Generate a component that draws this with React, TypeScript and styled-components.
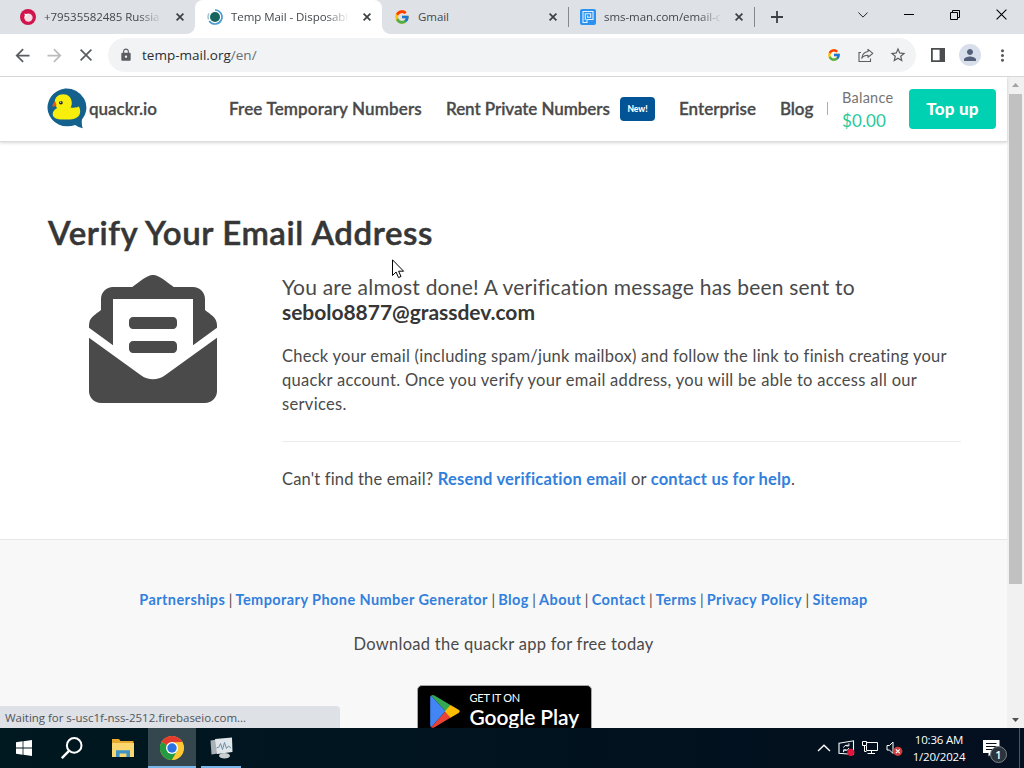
import React from "react";
import styled, { createGlobalStyle, css } from "styled-components";
import {
  MdArrowBack,
  MdArrowForward,
  MdLock,
  MdMoreVert,
  MdPerson,
  MdStarBorder,
} from "react-icons/md";
import { FcGoogle } from "react-icons/fc";
import { FaEnvelopeOpenText } from "react-icons/fa";

const uiFont = `"Open Sans", "Noto Sans", sans-serif`;
const siteFont = `Lato, "Open Sans", sans-serif`;

const GlobalStyle = createGlobalStyle`
  * {
    box-sizing: border-box;
  }

  body {
    margin: 0;
    overflow: hidden;
    background: #fff;
  }

  svg {
    display: block;
    flex: none;
  }
`;

const Screen = styled.div`
  position: relative;
  display: flex;
  flex-direction: column;
  width: 1024px;
  height: 768px;
  overflow: hidden;
  font-family: ${uiFont};
`;

/* ---------- browser ---------- */

const TabStrip = styled.div`
  display: flex;
  height: 34px;
  background: #dee1e6;
`;

const Tab = styled.div<{
  $width: number;
  $indent?: number;
  $active?: boolean;
  $line?: boolean;
}>`
  position: relative;
  display: flex;
  align-items: center;
  width: ${({ $width }) => $width}px;
  padding: 0 9px 0 ${({ $indent = 12 }) => $indent}px;
  ${({ $active }) =>
    $active &&
    css`
      background: #fff;
      border-radius: 8px 8px 0 0;

      &::before,
      &::after {
        content: "";
        position: absolute;
        bottom: 0;
        width: 8px;
        height: 8px;
      }
      &::before {
        left: -8px;
        background: radial-gradient(circle at 0 0, transparent 7.5px, #fff 8px);
      }
      &::after {
        right: -8px;
        background: radial-gradient(
          circle at 100% 0,
          transparent 7.5px,
          #fff 8px
        );
      }
    `}
  ${({ $line }) =>
    $line &&
    css`
      padding-right: 10px;

      &::after {
        content: "";
        position: absolute;
        right: 0;
        top: 7px;
        width: 1px;
        height: 20px;
        background: #85888d;
      }
    `}
`;

const TabTitle = styled.span<{ $fade?: boolean }>`
  width: 118px;
  margin-left: 8px;
  margin-right: auto;
  overflow: hidden;
  white-space: nowrap;
  font-size: 11.5px;
  line-height: 18px;
  letter-spacing: -0.05px;
  color: #43474c;
  ${({ $fade }) =>
    $fade &&
    css`
      mask-image: linear-gradient(to right, #000 80%, transparent);
    `}
`;

const NewTab = styled.div`
  display: flex;
  align-items: center;
  padding-left: 16px;
  flex: 1;
`;

const WindowButtons = styled.div`
  display: flex;
  height: 29px;
`;

const WindowButton = styled.div`
  display: flex;
  align-items: center;
  justify-content: center;
  width: 46px;
`;

const Toolbar = styled.div`
  display: flex;
  align-items: center;
  height: 43px;
  padding: 0 11px;
  background: #fff;
  border-bottom: 1px solid #d5d7da;
`;

const NavButton = styled.div<{ $muted?: boolean }>`
  display: flex;
  justify-content: center;
  width: 22px;
  margin-right: 10px;
  color: ${({ $muted }) => ($muted ? "#babcbe" : "#5a5d61")};
`;

const Omnibox = styled.div`
  display: flex;
  align-items: center;
  width: 808px;
  height: 34px;
  margin-left: 1px;
  padding: 0 8px 0 11px;
  border-radius: 17px;
  background: #f1f3f4;
  color: #5a5d61;
`;

const Url = styled.span`
  margin-left: 9px;
  margin-right: auto;
  font-size: 13.5px;
  color: #2b2d30;

  span {
    color: #6a6e73;
  }
`;

const OmniIcon = styled.div`
  display: flex;
  justify-content: center;
  width: 20px;
  margin-left: 12px;
`;

const ToolbarRight = styled.div`
  display: flex;
  flex: 1;
  align-items: center;
  padding-left: 15px;
  color: #5a5d61;
`;

const Avatar = styled.div`
  display: flex;
  align-items: center;
  justify-content: center;
  width: 22px;
  height: 22px;
  margin: 0 12px 0 14px;
  border-radius: 50%;
  background: #d9deeb;
  color: #54607a;
`;

/* ---------- page ---------- */

const Viewport = styled.div`
  position: relative;
  display: flex;
  height: 651px;
  overflow: hidden;
`;

const Page = styled.div`
  width: 1007px;
  background: #fff;
  font-family: ${siteFont};
  font-size: 16.5px;
  font-variant-ligatures: none;
  color: #4a4a4a;
`;

const Navbar = styled.header`
  position: relative;
  display: flex;
  align-items: center;
  height: 65px;
  padding: 0 0 2px 47px;
  border-bottom: 1px solid #dcdcdc;
  box-shadow: 0 1px 3px rgba(0, 0, 0, 0.16);
  white-space: nowrap;
`;

const Brand = styled.div`
  display: flex;
  align-items: center;
  width: 182px;
  gap: 2px;
  font-size: 17px;
  font-weight: 600;
  letter-spacing: -0.05px;
  -webkit-text-stroke: 0.25px;
`;

const NavLink = styled.a<{ $width: number; $tracking?: number }>`
  width: ${({ $width }) => $width}px;
  font-size: 17px;
  font-weight: 600;
  letter-spacing: ${({ $tracking = 0 }) => $tracking}px;
  -webkit-text-stroke: 0.3px;
`;

const NewTag = styled.span`
  width: 35px;
  margin: 2px 24px 0 0;
  border-radius: 4px;
  background: #025497;
  color: #fff;
  font-size: 8.5px;
  font-weight: 900;
  line-height: 24px;
  text-align: center;
`;

const Divider = styled.span`
  width: 1px;
  height: 13px;
  background: #adadad;
`;

const Balance = styled.div`
  display: flex;
  flex-direction: column;
  width: 67px;
  margin-top: 1px;
  padding-left: 14px;
  font-size: 14.5px;
  line-height: 23px;
  letter-spacing: 0.25px;
  color: #757575;

  strong {
    font-size: 17px;
    font-weight: 400;
    letter-spacing: 0.1px;
    color: #26c99c;
  }
`;

const TopUp = styled.button`
  width: 87px;
  height: 40px;
  margin: 2px 0 0 14px;
  padding: 0 0 2px;
  border: 0;
  border-radius: 4px;
  background: #00d1b2;
  color: #fff;
  font-family: inherit;
  font-size: 17px;
  font-weight: 900;
  letter-spacing: 0.2px;
`;

const Main = styled.main`
  height: 397px;
  padding: 70px 46px 0 48px;
`;

const Title = styled.h1`
  margin: 0;
  font-size: 33px;
  font-weight: 600;
  line-height: 40px;
  letter-spacing: 0.57px;
  -webkit-text-stroke: 0.5px;
  color: #363636;
`;

const Columns = styled.div`
  display: flex;
  gap: 65px;
  margin-top: 22px;
  padding-left: 41px;
`;

const EnvelopeIcon = styled(FaEnvelopeOpenText)`
  width: 128px;
  height: 128px;
  margin-top: 1px;
`;

const Message = styled.div`
  flex: 1;
  white-space: nowrap;
`;

const Lead = styled.p`
  margin: 0 0 20px;
  font-size: 21px;
  line-height: 25px;
  letter-spacing: 0.21px;

  strong {
    color: #363636;
    letter-spacing: -0.04px;
  }
`;

const Text = styled.p<{ $tracking?: number }>`
  margin: 0;
  line-height: 24px;
  letter-spacing: ${({ $tracking = 0.25 }) => $tracking}px;
`;

const Rule = styled.hr`
  height: 1px;
  margin: 25px 0;
  border: 0;
  background: #ededed;
`;

const Link = styled.a`
  color: #3280dc;
  font-weight: 700;
  letter-spacing: 0.21px;
`;

const Footer = styled.footer`
  display: flex;
  flex-direction: column;
  align-items: center;
  height: 220px;
  padding-top: 48px;
  border-top: 1px solid #e6e6e6;
  background: #f8f8f8;
`;

const FooterLinks = styled.div`
  font-size: 14.5px;
  line-height: 24px;
  letter-spacing: -0.27px;
  white-space: nowrap;

  ${Link} {
    letter-spacing: 0.42px;
  }
`;

const Download = styled.p`
  margin: 20px 0 29px;
  line-height: 24px;
  letter-spacing: 0.28px;
`;

const PlayBadge = styled.div`
  display: flex;
  width: 175px;
  height: 53px;
  margin-left: 1px;
  padding: 8px 0 0 12px;
  border: 1px solid #a6a6a6;
  border-radius: 5px;
  background: #000;
  color: #fff;
`;

const PlayText = styled.div`
  margin-left: 10px;
  margin-top: -3px;
  font-size: 11px;
  line-height: 14px;
  letter-spacing: -0.25px;
  white-space: nowrap;

  strong {
    display: block;
    font-size: 21px;
    font-weight: 600;
    line-height: 23px;
    letter-spacing: -0.1px;
  }
`;

const Scrollbar = styled.div`
  display: flex;
  flex-direction: column;
  align-items: center;
  justify-content: space-between;
  width: 17px;
  padding: 6px 0;
  background: #f1f1f1;
`;

const Thumb = styled.div`
  width: 13px;
  height: 490px;
  margin-top: 7px;
  margin-bottom: auto;
  background: #c1c1c1;
`;

const StatusBubble = styled.div`
  position: absolute;
  left: 0;
  bottom: 0;
  width: 340px;
  height: 22px;
  padding-left: 5px;
  border-top-right-radius: 4px;
  background: #dee1e6;
  color: #505459;
  font-size: 11.5px;
  line-height: 23px;
  letter-spacing: -0.03px;
`;

const Cursor = styled.svg`
  position: absolute;
  left: 392px;
  top: 259px;
`;

/* ---------- taskbar ---------- */

const Taskbar = styled.div`
  display: flex;
  height: 40px;
  background: linear-gradient(to right, #001820, #01131f 50%, #040f1f);
  color: #fff;
`;

const TaskItem = styled.div<{ $open?: boolean; $focused?: boolean }>`
  display: flex;
  align-items: center;
  justify-content: center;
  width: 48px;
  ${({ $open }) =>
    $open &&
    css`
      background: linear-gradient(#79b6ea, #79b6ea) 50% 100% / 40px 2px
        no-repeat;
    `}
  ${({ $focused }) =>
    $focused &&
    css`
      margin: 0 1px 0 2px;
      background: #34464e;
      box-shadow: inset 0 -2px #79b6ea;
    `}
`;

const PinnedItem = styled(TaskItem)`
  width: 50px;
  padding-left: 4px;
`;

const Tray = styled.div`
  display: flex;
  align-items: center;
  gap: 7px;
  margin-left: auto;
`;

const Clock = styled.div`
  display: flex;
  flex-direction: column;
  align-items: center;
  width: 54px;
  margin-left: 2px;
  font-size: 11.5px;
  line-height: 17.5px;
  letter-spacing: -0.2px;
  white-space: nowrap;
`;

const Notifications = styled.div`
  position: relative;
  width: 36px;
  height: 40px;
  margin-left: 10px;
  padding-top: 12px;
`;

const Count = styled.span`
  position: absolute;
  left: 7px;
  top: 18px;
  width: 17px;
  height: 17px;
  border: 1px solid #7d838a;
  border-radius: 50%;
  background: #2b333c;
  font-size: 11px;
  font-weight: 600;
  line-height: 15px;
  text-align: center;
`;

const ShowDesktop = styled.div`
  width: 5px;
  height: 40px;
  margin-left: -7px;
  border-left: 1px solid #4d5761;
`;

const Cross = ({ size = 8, width = 1.7, color = "#3c4043" }) => (
  <svg width={size} height={size} viewBox={`0 0 ${size} ${size}`}>
    <path
      d={`M.6 .6L${size - 0.6} ${size - 0.6}M${size - 0.6} .6L.6 ${size - 0.6}`}
      stroke={color}
      strokeWidth={width}
    />
  </svg>
);

const TabClose = styled.div`
  padding: 0 2px;
`;

const Duck = () => (
  <svg width="40" height="41" viewBox="2 0 38 41" preserveAspectRatio="none">
    <path
      d="M19.2 .5a19 19 0 1 0 9.6 36.4Q32 39.5 36 40.3Q34.6 37 35.2 31.4A19 19 0 0 0 19.2 .5Z"
      fill="#13618c"
    />
    <path
      d="M17.5 6.3c-4.8 0-8.2 3.3-8.1 7.8 0 2.7 1.1 4.5 2.2 5.8-2.6 1.4-4.2 3.7-4.2 6 0 3.7 3.6 5.5 9.5 5.5h6.8c6.3 0 9.9-3.4 9.8-8.1 0-1.8-.5-3.5-1.3-4.7-2 1.2-4.9 1.5-7.8 .9 .9-1.6 1.3-3.4 1.1-5.3-.3-4.7-3.5-7.9-8-7.9Z"
      fill="#f8ee0b"
    />
    <path d="M9.7 13.2c-1.5 1-2.4 3-2.7 5.5 1.8 0 3.2-.3 4.1-1.4Z" fill="#e2571f" />
    <circle cx="15.2" cy="14.8" r="1.8" fill="#222" />
    <circle cx="15" cy="14.2" r=".6" fill="#fff" />
  </svg>
);

const ChromeLogo = () => (
  <svg width="24" height="24" viewBox="0 0 24 24">
    <circle cx="12" cy="12" r="12" fill="#fcc934" />
    <path d="M12 12L1.6 6A12 12 0 0 1 22.4 6L12 6.5Z" fill="#e33b2e" />
    <path d="M1.6 6A12 12 0 0 0 12 24L17.2 15L12 12Z" fill="#249a41" />
    <path d="M22.4 6.6A12 12 0 0 1 12 24L17.2 15L16.5 6.6Z" fill="#fcc934" />
    <circle cx="12" cy="12" r="6" fill="#fff" />
    <circle cx="12" cy="12" r="4.7" fill="#2b72e4" />
  </svg>
);

const footerLinks = [
  "Partnerships",
  "Temporary Phone Number Generator",
  "Blog",
  "About",
  "Contact",
  "Terms",
  "Privacy Policy",
  "Sitemap",
];

const Browser = () => (
  <>
    <TabStrip>
      <Tab $width={195} $indent={20}>
        <svg width="16" height="16" viewBox="0 0 16 16">
          <circle cx="8" cy="8" r="8" fill="#d0144c" />
          <circle cx="8.4" cy="8.6" r="4.2" fill="#f5dbe3" />
          <path d="M4.3 4.6L8 5.8L5.4 8.3Z" fill="#fff" />
        </svg>
        <TabTitle $fade>+79535582485 Russia</TabTitle>
        <TabClose>
          <Cross />
        </TabClose>
      </Tab>
      <Tab $width={187} $active>
        <svg width="16" height="16" viewBox="0 0 16 16">
          <circle cx="8" cy="8" r="5" fill="#17645f" />
          <path
            d="M8 1A7 7 0 1 1 2.2 12"
            fill="none"
            stroke="#4a9bd0"
            strokeWidth="1.7"
          />
          <path d="M1.6 10.5A7 7 0 0 1 2 4.4" fill="none" stroke="#9cc5cd" strokeWidth="1.5" />
        </svg>
        <TabTitle $fade>Temp Mail - Disposabl</TabTitle>
        <TabClose>
          <Cross />
        </TabClose>
      </Tab>
      <Tab $width={187} $line>
        <FcGoogle size={16} />
        <TabTitle>Gmail</TabTitle>
        <TabClose>
          <Cross />
        </TabClose>
      </Tab>
      <Tab $width={186} $indent={11} $line>
        <svg width="16" height="16" viewBox="0 0 16 16">
          <rect width="16" height="16" rx="2" fill="#2b92f0" />
          <path
            d="M3 13.5V2.5H13V10.5H7V13.5H3ZM5.3 11V4.8H10.7V8.3H7.6V6.5"
            fill="none"
            stroke="#e4f3ff"
            strokeWidth="1.1"
          />
        </svg>
        <TabTitle $fade>sms-man.com/email-c</TabTitle>
        <TabClose>
          <Cross />
        </TabClose>
      </Tab>
      <NewTab>
        <svg width="12" height="12" viewBox="0 0 12 12">
          <path d="M6 0V12M0 6H12" stroke="#3c4043" strokeWidth="1.8" />
        </svg>
      </NewTab>
      <WindowButtons>
        <WindowButton>
          <svg width="10" height="6" viewBox="0 0 10 6">
            <path d="M.4 .5L5 5.1L9.6 .5" fill="none" stroke="#222" />
          </svg>
        </WindowButton>
        <WindowButton>
          <svg width="10" height="1">
            <rect width="10" height="1" fill="#000" />
          </svg>
        </WindowButton>
        <WindowButton>
          <svg width="10" height="10" viewBox="0 0 10 10">
            <path
              d="M.5 2.5H7.5V9.5H.5ZM2.5 2.5V.5H9.5V7.5H7.5"
              fill="none"
              stroke="#000"
            />
          </svg>
        </WindowButton>
        <WindowButton>
          <Cross size={11} width={1.1} color="#000" />
        </WindowButton>
      </WindowButtons>
    </TabStrip>

    <Toolbar>
      <NavButton>
        <MdArrowBack size={21} />
      </NavButton>
      <NavButton $muted>
        <MdArrowForward size={21} />
      </NavButton>
      <NavButton>
        <Cross size={12} width={1.7} color="#5a5d61" />
      </NavButton>
      <Omnibox>
        <MdLock size={14} />
        <Url>
          temp-mail.org<span>/en/</span>
        </Url>
        <OmniIcon>
          <FcGoogle size={14} />
        </OmniIcon>
        <OmniIcon>
          <svg width="16" height="15" viewBox="0 0 16 15" fill="none" stroke="#5a5d61">
            <path d="M3 4.5H1V13.5H12.5V10.5" strokeWidth="1.1" />
            <path
              d="M10 1.4L14.8 5.4L10 9.3V7.2C7.3 7.2 5.2 8 3.8 10.3C4.2 6.5 6.3 4 10 3.5Z"
              strokeWidth="1.1"
              strokeLinejoin="round"
            />
          </svg>
        </OmniIcon>
        <OmniIcon>
          <MdStarBorder size={18} />
        </OmniIcon>
      </Omnibox>
      <ToolbarRight>
        <svg width="14" height="14" viewBox="0 0 14 14">
          <path d="M0 0H14V14H0ZM1.8 1.8V12.2H8.6V1.8Z" fill="#4b4d50" fillRule="evenodd" />
        </svg>
        <Avatar>
          <MdPerson size={18} />
        </Avatar>
        <MdMoreVert size={19} />
      </ToolbarRight>
    </Toolbar>
  </>
);

const Site = () => (
  <Page>
    <Navbar>
      <Brand>
        <Duck />
        quackr.io
      </Brand>
      <NavLink $width={217} $tracking={0.15}>
        Free Temporary Numbers
      </NavLink>
      <NavLink $width={174} $tracking={-0.07}>
        Rent Private Numbers
      </NavLink>
      <NewTag>New!</NewTag>
      <NavLink $width={101}>Enterprise</NavLink>
      <NavLink $width={47} $tracking={-0.1}>
        Blog
      </NavLink>
      <Divider />
      <Balance>
        Balance
        <strong>$0.00</strong>
      </Balance>
      <TopUp>Top up</TopUp>
    </Navbar>

    <Main>
      <Title>Verify Your Email Address</Title>
      <Columns>
        <EnvelopeIcon />
        <Message>
          <Lead>
            You are almost done! A verification message has been sent to
            <br />
            <strong>sebolo8877@grassdev.com</strong>
          </Lead>
          <Text>
            Check your email (including spam/junk mailbox) and follow the link to
            finish creating your
          </Text>
          <Text $tracking={0.3}>
            quackr account. Once you verify your email address, you will be able
            to access all our
          </Text>
          <Text $tracking={0.33}>services.</Text>
          <Rule />
          <Text $tracking={0.16}>
            Can't find the email? <Link>Resend verification email</Link> or{" "}
            <Link>contact us for help</Link>.
          </Text>
        </Message>
      </Columns>
    </Main>

    <Footer>
      <FooterLinks>
        {footerLinks.map((label, i) => (
          <React.Fragment key={label}>
            {i > 0 && " | "}
            <Link>{label}</Link>
          </React.Fragment>
        ))}
      </FooterLinks>
      <Download>Download the quackr app for free today</Download>
      <PlayBadge>
        <svg width="30" height="35" viewBox="0 0 30 35">
          <path d="M1.2 1.6L15.5 17.3L1.2 33.2Q.2 32.4 .2 31V3.6Q.2 2.3 1.2 1.6Z" fill="#4285f4" />
          <path d="M1.2 1.6Q2.6 .6 4.5 1.6L20.8 11.2L15.5 17.3Z" fill="#34a853" />
          <path d="M1.2 33.2Q2.6 34.4 4.5 33.2L20.8 23.5L15.5 17.3Z" fill="#ea4335" />
          <path d="M20.5 11L28.6 15.8Q30.8 17.3 28.6 18.9L20.5 23.7L14.8 17.3Z" fill="#fbbc04" />
        </svg>
        <PlayText>
          GET IT ON
          <strong>Google Play</strong>
        </PlayText>
      </PlayBadge>
    </Footer>
  </Page>
);

const WindowsTaskbar = () => (
  <Taskbar>
    <TaskItem>
      <svg width="16" height="16" viewBox="0 0 16 16" fill="#fff">
        <path d="M0 2.2L6.6 1.3V7.6H0ZM7.4 1.2L16 0V7.6H7.4ZM0 8.4H6.6V14.7L0 13.8ZM7.4 8.4H16V16L7.4 14.8Z" />
      </svg>
    </TaskItem>
    <TaskItem>
      <svg width="22" height="22" viewBox="0 0 22 22" fill="none" stroke="#fff" strokeWidth="2">
        <circle cx="13.2" cy="8.4" r="7.3" />
        <path d="M8 13.8L.8 21.2" strokeWidth="2.4" />
      </svg>
    </TaskItem>
    <PinnedItem>
      <svg width="22" height="18" viewBox="0 0 22 18">
        <path d="M0 0H7L8.5 2H21.5V17H0Z" fill="#e8ab2e" />
        <path d="M0 4H22V18H0Z" fill="#fbd86f" />
        <path d="M4 18V11.3H18V18H14.4V14.5H7.6V18Z" fill="#3f93c5" />
      </svg>
    </PinnedItem>
    <TaskItem $focused>
      <ChromeLogo />
    </TaskItem>
    <TaskItem $open>
      <svg width="23" height="22" viewBox="0 0 23 22">
        <path d="M.5 3.5L11 2V16L1.5 17.5Z" fill="#a9b1b5" />
        <ellipse cx="14.5" cy="18.7" rx="5.5" ry="2.8" fill="#c9ced0" />
        <path d="M5 2L22 .6L22.5 15L7 17Z" fill="#e0e6e9" />
        <path
          d="M6.5 11L9 10L10.5 6.5L12.5 12.5L14.5 5.5L16.5 11.5L18.5 9L21 11"
          fill="none"
          stroke="#6a90a5"
        />
      </svg>
    </TaskItem>

    <Tray>
      <svg width="14" height="8" viewBox="0 0 14 8">
        <path d="M1 7L7 1.2L13 7" fill="none" stroke="#fff" strokeWidth="1.4" />
      </svg>
      <svg width="17" height="16" viewBox="0 0 17 16" fill="none" stroke="#fff">
        <path d="M1 3.2L15.5 .8V14.5L1 13.2Z" strokeWidth="1.1" />
        <path d="M5.4 7.6Q6.4 4.6 10.2 5.2M10.9 3.4V5.9H8.4M11 8Q10 11 6.4 10.4M5.6 12.2V9.8H8.2" />
        <circle cx="12.8" cy="12.3" r="3.6" fill="#e0173a" stroke="none" />
      </svg>
      <svg width="17" height="16" viewBox="0 0 17 16" fill="none" stroke="#fff">
        <path d="M5 2.5H15.5V10.5H4.5V6M9.5 10.5V13.5M5.5 13.5H13" />
        <path d="M.5 1.5H4.5V5.5H.5ZM2.5 5.5V11.5H4.5" />
      </svg>
      <svg width="17" height="16" viewBox="0 0 17 16">
        <path d="M1 5.5H3.5L7 2V13.5L3.5 10H1Z" fill="none" stroke="#fff" />
        <circle cx="11.8" cy="11.3" r="4.6" fill="#cf3d3d" />
        <path d="M9.9 9.4L13.7 13.2M13.7 9.4L9.9 13.2" stroke="#fff" strokeWidth="1.2" />
      </svg>
      <Clock>
        <span>10:36 AM</span>
        <span>1/20/2024</span>
      </Clock>
      <Notifications>
        <svg width="17" height="18" viewBox="0 0 17 18">
          <path d="M0 0H16.5V13H9L5.5 16.5V13H0Z" fill="#fff" />
          <path d="M3 3.5H13.5M3 6.5H13.5M3 9.5H10" stroke="#07121f" strokeWidth="1.1" />
        </svg>
        <Count>1</Count>
      </Notifications>
      <ShowDesktop />
    </Tray>
  </Taskbar>
);

export default function App() {
  return (
    <Screen>
      <GlobalStyle />
      <Browser />
      <Viewport>
        <Site />
        <Scrollbar>
          <svg width="7" height="4">
            <path d="M0 4L3.5 0L7 4Z" fill="#a3a3a3" />
          </svg>
          <Thumb />
          <svg width="7" height="4">
            <path d="M0 0L3.5 4L7 0Z" fill="#505050" />
          </svg>
        </Scrollbar>
        <StatusBubble>Waiting for s-usc1f-nss-2512.firebaseio.com...</StatusBubble>
      </Viewport>
      <WindowsTaskbar />
      <Cursor width="13" height="20" viewBox="0 0 13 20">
        <path
          d="M.5 .8V16.5L4.1 13L6.5 18.6L9 17.5L6.6 12.2H11.6Z"
          fill="#fff"
          stroke="#000"
        />
      </Cursor>
    </Screen>
  );
}
